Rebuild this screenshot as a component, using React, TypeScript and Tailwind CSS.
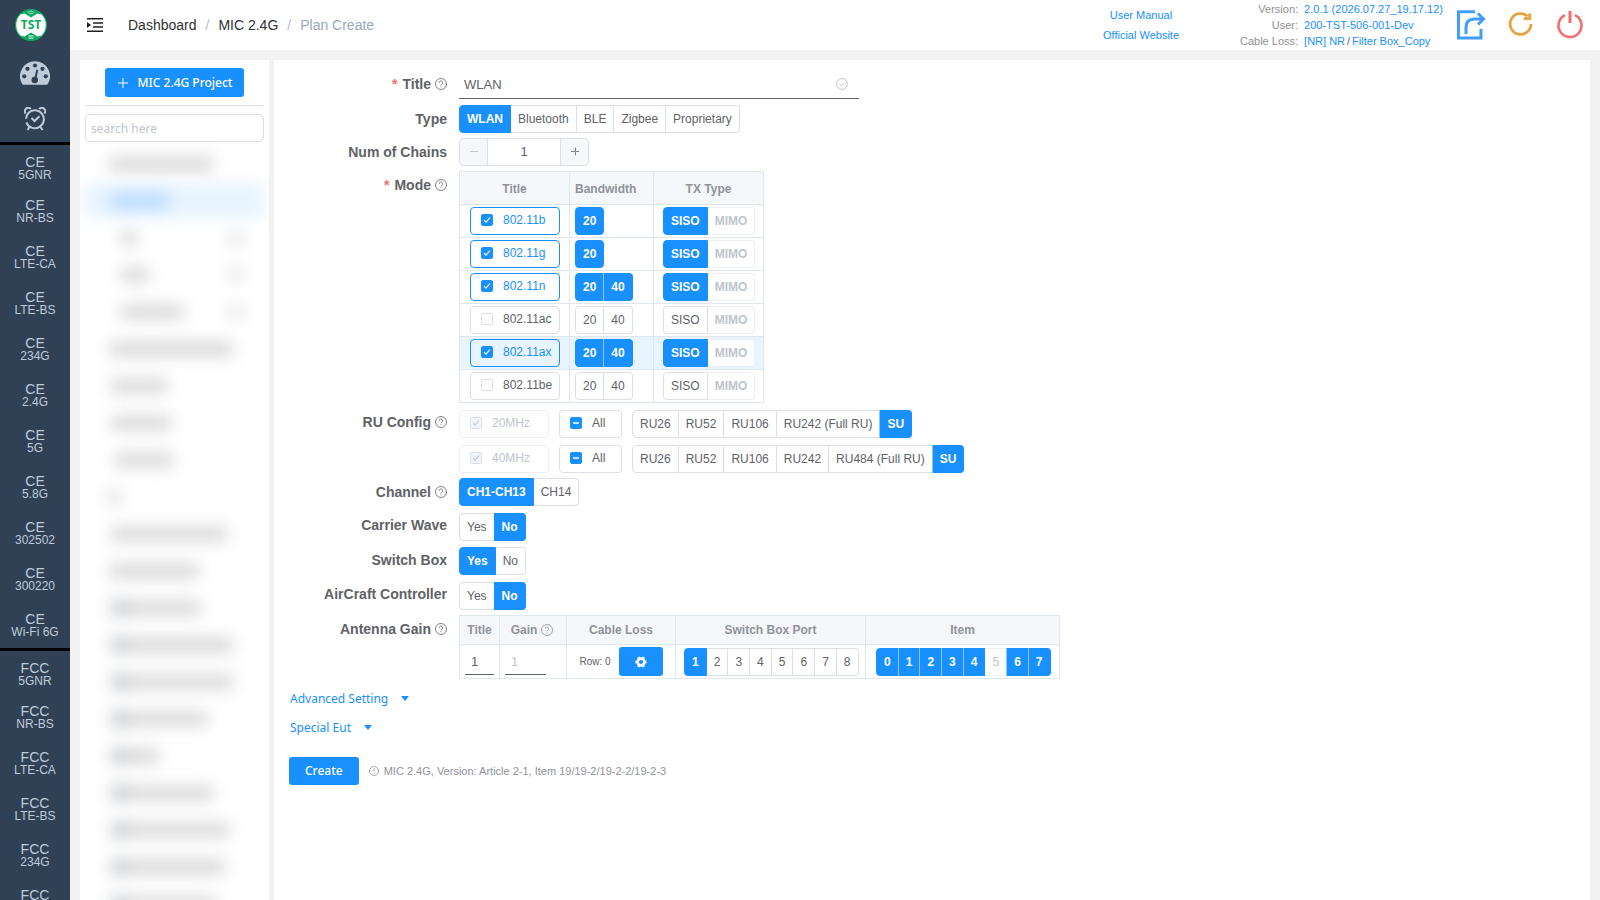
import { ReactNode, useState } from 'react';

const CE_ITEMS = ['5GNR', 'NR-BS', 'LTE-CA', 'LTE-BS', '234G', '2.4G', '5G', '5.8G', '302502', '300220', 'Wi-Fi 6G'];
const FCC_ITEMS = ['5GNR', 'NR-BS', 'LTE-CA', 'LTE-BS', '234G', '2.4G'];

const MODES = [
  { title: '802.11b', checked: true, bandwidths: ['20'] },
  { title: '802.11g', checked: true, bandwidths: ['20'] },
  { title: '802.11n', checked: true, bandwidths: ['20', '40'] },
  { title: '802.11ac', checked: false, bandwidths: ['20', '40'] },
  { title: '802.11ax', checked: true, bandwidths: ['20', '40'], current: true },
  { title: '802.11be', checked: false, bandwidths: ['20', '40'] },
];

const RU_ROWS = [
  { title: '20MHz', options: ['RU26', 'RU52', 'RU106', 'RU242 (Full RU)', 'SU'] },
  { title: '40MHz', options: ['RU26', 'RU52', 'RU106', 'RU242', 'RU484 (Full RU)', 'SU'] },
];

type HiddenProject = { indent: number; width: number; folder?: boolean; action?: boolean; selected?: boolean };

const HIDDEN_PROJECTS: HiddenProject[] = [
  { indent: 24, width: 104 },
  { indent: 26, width: 58, selected: true },
  { indent: 36, width: 16, action: true },
  { indent: 36, width: 28, action: true },
  { indent: 36, width: 62, action: true },
  { indent: 24, width: 124 },
  { indent: 26, width: 56 },
  { indent: 26, width: 60 },
  { indent: 30, width: 58 },
  { indent: 24, width: 10 },
  { indent: 26, width: 116 },
  { indent: 24, width: 90 },
  { indent: 26, width: 90, folder: true },
  { indent: 26, width: 122, folder: true },
  { indent: 26, width: 122, folder: true },
  { indent: 26, width: 96, folder: true },
  { indent: 26, width: 48, folder: true },
  { indent: 26, width: 102, folder: true },
  { indent: 26, width: 118, folder: true },
  { indent: 26, width: 114, folder: true },
  { indent: 26, width: 104, folder: true },
];

function LogoIcon() {
  return (
    <svg className="w-8 h-8" viewBox="0 0 32 32">
      <circle cx="16" cy="16" r="16" fill="#13a85f" />
      <path d="M5.500 5.500 A15 15 0 0 0 5.500 26.500 L9.500 27.500 L16 23.500 L22.500 27.500 L26.500 26.500 A15 15 0 0 0 26.500 5.500 L22.500 4.500 L16 8.500 L9.500 4.500 Z" fill="#fff" />
      <path d="M12.500 3.500 Q16 0.500 19.500 3.500 M14 5 Q16 3.300 18 5" fill="none" stroke="#a5dfc2" strokeWidth="0.900" />
      <path d="M14 26.500 h4 v3 h-4 z M14 28 h4 M16 26.500 v3" fill="none" stroke="#a5dfc2" strokeWidth="0.800" />
      <text x="16" y="20" textAnchor="middle" fontFamily="Open Sans, sans-serif" fontWeight="700" fontSize="12" fill="#13a85f">TST</text>
    </svg>
  );
}

function GaugeIcon() {
  return (
    <svg className="w-[30px] h-6" viewBox="0 0 128 100">
      <path d="M64 0a64 64 0 0 0-54 98q2 2 5 2h98q3 0 5-2A64 64 0 0 0 64 0z" fill="#bfcbd9" />
      <g fill="#304156">
        <circle cx="18" cy="64" r="9" />
        <circle cx="32" cy="32" r="9" />
        <circle cx="64" cy="18" r="9" />
        <circle cx="96" cy="32" r="9" />
        <circle cx="110" cy="64" r="9" />
        <circle cx="63" cy="80" r="14" />
        <path d="M60 78L70 35l8 2-10 44z" />
      </g>
    </svg>
  );
}

function AlarmIcon() {
  return (
    <svg className="w-[22px] h-6" viewBox="0 0 22 24" fill="none" stroke="#bfcbd9" strokeWidth="2">
      <path d="M4.600 5.800a9 9 0 1 1-2.200 9.500M4.600 5.800a9 9 0 0 0-2.500 6" />
      <path d="M1.600 6.500A3 3 0 0 1 6.800 2M20.400 6.500A3 3 0 0 0 15.200 2" />
      <path d="M7.500 11l3 3 5-4.800" />
      <path d="M5.500 20l-2 3M16.500 20l2 3" />
    </svg>
  );
}

function HelpIcon() {
  return (
    <svg className="w-3 h-3 shrink-0" viewBox="0 0 12 12" fill="none" stroke="currentColor" strokeWidth="0.800">
      <circle cx="6" cy="6" r="5.500" />
      <path d="M4.300 4.800a1.700 1.700 0 1 1 2.500 1.400q-.8.400-.8 1.100" />
      <path d="M6 8.200v1" />
    </svg>
  );
}

function Segments({
  name,
  options,
  selected,
  disabled = [],
  multiple = false,
}: {
  name: string;
  options: string[];
  selected: string[];
  disabled?: string[];
  multiple?: boolean;
}) {
  return (
    <div className="flex" role={multiple ? 'group' : 'radiogroup'} aria-label={name}>
      {options.map((option) => (
        <label
          key={option}
          className={`relative h-7 px-[7px] flex items-center border-y border-r first:border-l first:rounded-l last:rounded-r border-[#dcdfe6] bg-white whitespace-nowrap cursor-pointer has-checked:bg-[#1890ff] has-checked:border-[#1890ff] has-checked:text-white has-checked:font-bold has-disabled:text-[#c0c4cc] has-disabled:border-[#ebeef5] has-disabled:cursor-not-allowed ${
            multiple
              ? 'not-first:has-checked:shadow-[-1px_0_0_0_#8cc8ff]'
              : 'not-first:has-checked:shadow-[-1px_0_0_0_#1890ff]'
          }`}
        >
          <input
            type={multiple ? 'checkbox' : 'radio'}
            name={name}
            className="sr-only"
            defaultChecked={selected.includes(option)}
            disabled={disabled.includes(option)}
          />
          {option}
        </label>
      ))}
    </div>
  );
}

function BorderedCheckbox({
  label,
  checked = false,
  partial = false,
  disabled = false,
  wide = true,
}: {
  label: string;
  checked?: boolean;
  partial?: boolean;
  disabled?: boolean;
  wide?: boolean;
}) {
  const [isChecked, setIsChecked] = useState(checked);
  const highlighted = isChecked && !disabled;

  return (
    <label
      className={`h-7 px-[10px] pb-[2px] flex items-center gap-[10px] border rounded ${wide ? 'w-[90px]' : 'w-[63px]'} ${
        highlighted ? 'border-[#1890ff] text-[#1890ff]' : disabled ? 'border-[#ebeef5] text-[#c0c4cc]' : 'border-[#dcdfe6]'
      }`}
    >
      <span className="relative w-3 h-3 shrink-0">
        <input
          type="checkbox"
          checked={isChecked}
          disabled={disabled}
          onChange={() => setIsChecked(!isChecked)}
          className={`block appearance-none w-3 h-3 border rounded-[2px] ${
            highlighted || partial
              ? 'bg-[#1890ff] border-[#1890ff]'
              : disabled
                ? 'bg-[#f2f6fc] border-[#dcdfe6]'
                : 'bg-white border-[#dcdfe6]'
          }`}
        />
        <svg
          className={`absolute inset-0 w-3 h-3 pointer-events-none ${disabled ? 'text-[#c0c4cc]' : 'text-white'}`}
          viewBox="0 0 12 12"
          fill="none"
          stroke="currentColor"
        >
          {partial ? <path d="M3 6h6" strokeWidth="1.500" /> : isChecked && <path d="M3 6.200l2 2 4-4.700" strokeWidth="1.100" />}
        </svg>
      </span>
      {label}
    </label>
  );
}

function FormRow({
  label,
  required = false,
  help = false,
  htmlFor,
  offset = '',
  children,
}: {
  label: string;
  required?: boolean;
  help?: boolean;
  htmlFor?: string;
  offset?: string;
  children: ReactNode;
}) {
  return (
    <div className={`grid grid-cols-[170px_1fr] ${offset}`}>
      <label htmlFor={htmlFor} className="h-7 pr-3 flex items-center justify-end gap-1 text-sm font-bold whitespace-nowrap">
        {required && <span className="pr-px text-[#f56c6c]">*</span>}
        {label}
        {help && <HelpIcon />}
      </label>
      {children}
    </div>
  );
}

function NavGroup({ region, items }: { region: string; items: string[] }) {
  return (
    <ul className="border-t-[3px] border-black">
      {items.map((item) => (
        <li key={item} className="group">
          <a href="#" className="block pt-[11px] pb-[9px] group-first:pb-[6px] text-center">
            <span className="block text-sm leading-[13px]">{region}</span>
            <span className="block text-xs leading-[13px]">{item}</span>
          </a>
        </li>
      ))}
    </ul>
  );
}

function Sidebar() {
  return (
    <nav className="w-[70px] shrink-0 overflow-hidden bg-[#304156] text-[#bfcbd9]">
      <a href="#" aria-label="Home" className="h-[50px] pl-[15px] flex items-center">
        <LogoIcon />
      </a>
      <a href="#" aria-label="Dashboard" className="h-[46px] flex items-center justify-center">
        <GaugeIcon />
      </a>
      <a href="#" aria-label="Schedule" className="h-[46px] flex items-center justify-center">
        <AlarmIcon />
      </a>
      <NavGroup region="CE" items={CE_ITEMS} />
      <NavGroup region="FCC" items={FCC_ITEMS} />
    </nav>
  );
}

function Header() {
  return (
    <header className="h-[50px] shrink-0 pl-[17px] pr-4 flex items-center bg-white">
      <button aria-label="Toggle sidebar">
        <svg className="w-4 h-4" viewBox="0 0 16 16" fill="none" stroke="#222" strokeWidth="1.600">
          <path d="M0 1.800h16M6 6h10M6 10h10M0 14.200h16" />
          <path d="M0 5l4 3-4 3z" fill="#222" stroke="none" />
        </svg>
      </button>
      <nav className="ml-[25px] flex gap-[9px] text-sm text-[#303133]">
        <a href="#">Dashboard</a>
        <span className="text-[#b4bccc]">/</span>
        <a href="#">MIC 2.4G</a>
        <span className="text-[#b4bccc]">/</span>
        <span className="text-[#97a8be]">Plan Create</span>
      </nav>

      <div className="ml-auto flex flex-col items-center text-[11px] leading-5 text-[#1890ff]">
        <a href="#">User Manual</a>
        <a href="#">Official Website</a>
      </div>
      <dl className="ml-[61px] w-[210px] grid grid-cols-[auto_1fr] gap-x-[6px] text-[11px] leading-4 text-[#1890ff] whitespace-nowrap">
        <dt className="text-right text-[#909090]">Version:</dt>
        <dd>2.0.1 (2026.07.27_19.17.12)</dd>
        <dt className="text-right text-[#909090]">User:</dt>
        <dd>200-TST-506-001-Dev</dd>
        <dt className="text-right text-[#909090]">Cable Loss:</dt>
        <dd>
          [NR] NR<span className="px-[2px] text-[#606266]">/</span>Filter Box_Copy
        </dd>
      </dl>
      <button aria-label="Share" className="ml-[6px]">
        <svg className="w-[30px] h-[30px]" viewBox="0 0 30 30" fill="none" stroke="#409eff" strokeWidth="3">
          <path d="M19 1.800H2.500v26.200h22.500V19" />
          <path d="M10 24v-6.500q0-8.500 8.500-8.500H26" />
          <path d="M22 3.500l5.500 5.500-5.500 5.500" />
        </svg>
      </button>
      <button aria-label="Refresh" className="ml-[22px]">
        <svg className="w-[26px] h-[26px]" viewBox="0 0 26 26" fill="none" stroke="#e6a23c" strokeWidth="2.800">
          <path d="M22.900 12a10.400 10.400 0 1 1-3.400-7.700" />
          <path d="M16 5.500h4.500V1.800h2.400v6H16z" fill="#e6a23c" strokeWidth="0.600" />
        </svg>
      </button>
      <button aria-label="Log out" className="ml-[22px]">
        <svg className="w-7 h-7" viewBox="0 0 28 28" fill="none" stroke="#f56c6c" strokeWidth="2.600">
          <path d="M9 4.200a11.500 11.500 0 1 0 10 0" />
          <path d="M14 0v12" strokeWidth="3" />
        </svg>
      </button>
    </header>
  );
}

function ProjectPanel() {
  return (
    <aside className="w-[189px] shrink-0 px-[5px] pt-2 bg-white overflow-hidden font-['Noto_Sans',sans-serif]">
      <button className="mx-auto h-[29px] px-3 flex items-center gap-[9px] rounded-[3px] bg-[#1890ff] text-white text-xs font-medium whitespace-nowrap">
        <svg className="w-3 h-3" viewBox="0 0 12 12" stroke="currentColor">
          <path d="M6 1v10M1 6h10" />
        </svg>
        MIC 2.4G Project
      </button>
      <hr className="my-2 border-[#dcdfe6]" />
      <input
        type="search"
        aria-label="Search projects"
        placeholder="search here"
        className="block w-full h-7 px-[5px] border border-[#dcdfe6] rounded text-xs placeholder:text-[#c0c4cc]"
      />
      <ul aria-hidden="true" className="mt-[3px]">
        {HIDDEN_PROJECTS.map((project, i) => (
          <li key={i} className="relative h-[37px] flex items-center">
            {project.selected && <span className="absolute inset-x-0 inset-y-px bg-[#e8f4ff] blur-[7px]" />}
            <span className="relative flex grow items-center blur-[8px]" style={{ paddingLeft: project.indent }}>
              {project.folder && <span className="w-4 h-4 bg-[#c6cace]" />}
              <span
                className={project.selected ? 'h-[14px] bg-[#b4d8ff]' : 'h-[14px] bg-[#d6d6d6]'}
                style={{ width: project.folder ? project.width - 16 : project.width }}
              />
              {project.action && <span className="ml-auto mr-[22px] w-3 h-3 bg-[#dcdcdc]" />}
            </span>
          </li>
        ))}
      </ul>
    </aside>
  );
}

function ModeTable() {
  return (
    <table className="w-[304px] table-fixed border-collapse [&_td]:border [&_th]:border [&_td]:border-[#dfe6ec] [&_th]:border-[#dfe6ec]">
      <colgroup>
        <col className="w-[110px]" />
        <col className="w-[84px]" />
        <col className="w-[110px]" />
      </colgroup>
      <thead className="bg-[#f5f7fa] text-[#909399]">
        <tr className="h-[33px]">
          <th className="pt-[2px]">Title</th>
          <th className="pt-[2px] pl-[5px] text-left">Bandwidth</th>
          <th className="pt-[2px]">TX Type</th>
        </tr>
      </thead>
      <tbody>
        {MODES.map((mode) => (
          <tr key={mode.title} className={mode.current ? 'bg-[#e8f4ff]' : ''}>
            <td className="pl-[10px] py-[2px]">
              <BorderedCheckbox label={mode.title} checked={mode.checked} />
            </td>
            <td className="pl-[5px] py-[2px]">
              <Segments
                name={`Bandwidth ${mode.title}`}
                options={mode.bandwidths}
                selected={mode.checked ? mode.bandwidths : []}
                multiple
              />
            </td>
            <td className="pl-[9px] py-[2px] [&_label:last-child]:font-bold">
              <Segments
                name={`TX Type ${mode.title}`}
                options={['SISO', 'MIMO']}
                selected={mode.checked ? ['SISO'] : []}
                disabled={['MIMO']}
                multiple
              />
            </td>
          </tr>
        ))}
      </tbody>
    </table>
  );
}

function AntennaTable() {
  return (
    <table className="w-[600px] table-fixed border-collapse [&_td]:border [&_th]:border [&_td]:border-[#dfe6ec] [&_th]:border-[#dfe6ec]">
      <colgroup>
        <col className="w-[40px]" />
        <col className="w-[67px]" />
        <col className="w-[109px]" />
        <col className="w-[190px]" />
        <col className="w-[194px]" />
      </colgroup>
      <thead className="bg-[#f5f7fa] text-[#909399]">
        <tr className="h-[29px]">
          <th>Title</th>
          <th>
            <span className="pr-[2px] flex items-center justify-center gap-1">
              Gain <HelpIcon />
            </span>
          </th>
          <th>Cable Loss</th>
          <th>Switch Box Port</th>
          <th>Item</th>
        </tr>
      </thead>
      <tbody>
        <tr>
          <td className="px-[5px] py-[2px]">
            <input aria-label="Antenna title" defaultValue="1" className="block w-full h-[27px] px-[6px] border-b border-[#606266] text-[13px]" />
          </td>
          <td className="px-[5px] py-[2px]">
            <input
              aria-label="Antenna gain"
              placeholder="1"
              className="block w-[41px] h-[27px] px-[6px] border-b border-[#606266] text-[13px] placeholder:text-[#c0c4cc]"
            />
          </td>
          <td className="py-[2px]">
            <div className="flex items-center justify-center gap-2 text-[10px]">
              Row: 0
              <button
                type="button"
                aria-label="Cable loss settings"
                className="w-11 h-[29px] flex items-center justify-center rounded-[3px] bg-[#1890ff]"
              >
                <svg className="w-3 h-3" viewBox="0 0 12 12" fill="none" stroke="#fff">
                  <circle cx="6" cy="6" r="3.400" strokeWidth="2.600" />
                  <path d="M6 0.200" />
                  <path d="M3.200 1.200l5.600 9.600M8.800 1.200l-5.600 9.600M0.300 6h11.400" strokeWidth="2.600" strokeDasharray="2.400 6.400 2.400 20" />
                </svg>
              </button>
            </div>
          </td>
          <td className="pl-2 py-[2px]">
            <Segments name="Switch Box Port" options={['1', '2', '3', '4', '5', '6', '7', '8']} selected={['1']} />
          </td>
          <td className="pl-[10px] py-[2px]">
            <Segments
              name="Item"
              options={['0', '1', '2', '3', '4', '5', '6', '7']}
              selected={['0', '1', '2', '3', '4', '6', '7']}
              disabled={['5']}
              multiple
            />
          </td>
        </tr>
      </tbody>
    </table>
  );
}

function Stepper() {
  const [value, setValue] = useState(1);

  return (
    <div className="w-[130px] h-7 flex border border-[#dcdfe6] rounded overflow-hidden">
      <button
        type="button"
        aria-label="Decrease"
        disabled={value <= 1}
        onClick={() => setValue(value - 1)}
        className="w-7 shrink-0 flex items-center justify-center border-r border-[#dcdfe6] bg-[#f5f7fa] text-[#808389] disabled:text-[#c0c4cc]"
      >
        <svg className="w-[10px] h-[10px]" viewBox="0 0 10 10" stroke="currentColor">
          <path d="M1 4.500h8" />
        </svg>
      </button>
      <input
        id="chains"
        value={value}
        onChange={(e) => setValue(Number(e.target.value) || 1)}
        className="grow min-w-0 text-center text-[13px]"
      />
      <button
        type="button"
        aria-label="Increase"
        onClick={() => setValue(value + 1)}
        className="w-7 shrink-0 flex items-center justify-center border-l border-[#dcdfe6] bg-[#f5f7fa] text-[#808389]"
      >
        <svg className="w-[10px] h-[10px]" viewBox="0 0 10 10" stroke="currentColor">
          <path d="M1 4.500h8M5.500 0.500v8" />
        </svg>
      </button>
    </div>
  );
}

function MoreButton({ label }: { label: string }) {
  return (
    <button type="button" className="h-[29px] px-px flex items-center gap-[13px] text-xs text-[#1890ff] font-['Noto_Sans',sans-serif]">
      {label}
      <svg className="w-2 h-[5px]" viewBox="0 0 8 5" fill="currentColor">
        <path d="M0 0h8L4 5z" />
      </svg>
    </button>
  );
}

function PlanForm() {
  return (
    <form className="px-[15px] pt-[10px]">
      <div className="flex flex-col gap-[5px]">
        <FormRow label="Title" htmlFor="title" required help offset="pb-px">
          <div className="w-[400px] h-[29px] flex items-center border-b border-[#606266]">
            <input id="title" defaultValue="WLAN" className="grow h-full px-[5px] text-[13px]" />
            <svg className="mr-[11px] w-3 h-3" viewBox="0 0 12 12" fill="none" stroke="#c0c4cc">
              <circle cx="6" cy="6" r="5.400" />
              <path d="M3.300 6l2 2 3.500-3.500" />
            </svg>
          </div>
        </FormRow>
        <FormRow label="Type">
          <Segments name="Type" options={['WLAN', 'Bluetooth', 'BLE', 'Zigbee', 'Proprietary']} selected={['WLAN']} />
        </FormRow>
        <FormRow label="Num of Chains" htmlFor="chains">
          <Stepper />
        </FormRow>
        <FormRow label="Mode" required help>
          <ModeTable />
        </FormRow>
        <FormRow label="RU Config" help>
          <div className="pt-[2px] flex flex-col gap-[7px]">
            {RU_ROWS.map((row) => (
              <div key={row.title} className="flex gap-[10px]">
                <BorderedCheckbox label={row.title} checked disabled />
                <BorderedCheckbox label="All" partial wide={false} />
                <Segments name={`RU Config ${row.title}`} options={row.options} selected={['SU']} multiple />
              </div>
            ))}
          </div>
        </FormRow>
        <FormRow label="Channel" help>
          <Segments name="Channel" options={['CH1-CH13', 'CH14']} selected={['CH1-CH13']} />
        </FormRow>
        <FormRow label="Carrier Wave">
          <div className="pt-[2px]">
            <Segments name="Carrier Wave" options={['Yes', 'No']} selected={['No']} />
          </div>
        </FormRow>
        <FormRow label="Switch Box">
          <div className="pt-px">
            <Segments name="Switch Box" options={['Yes', 'No']} selected={['Yes']} />
          </div>
        </FormRow>
        <FormRow label="AirCraft Controller">
          <div className="pt-[2px]">
            <Segments name="AirCraft Controller" options={['Yes', 'No']} selected={['No']} />
          </div>
        </FormRow>
        <FormRow label="Antenna Gain" help>
          <AntennaTable />
        </FormRow>
      </div>

      <div className="mt-[5px]">
        <MoreButton label="Advanced Setting" />
        <MoreButton label="Special Eut" />
      </div>

      <div className="mt-[15px] flex items-center">
        <button type="button" className="h-7 px-4 rounded-[3px] bg-[#1890ff] text-white text-xs font-medium font-['Noto_Sans',sans-serif]">
          Create
        </button>
        <p className="ml-[10px] flex items-center gap-[5px] text-[11px] text-[#909399]">
          <svg className="w-[10px] h-[10px]" viewBox="0 0 10 10" fill="none" stroke="currentColor" strokeWidth="0.800">
            <circle cx="5" cy="5" r="4.500" />
            <path d="M5 2.300v3.500M5 6.800v1" />
          </svg>
          MIC 2.4G, Version: Article 2-1, Item 19/19-2/19-2-2/19-2-3
        </p>
      </div>
    </form>
  );
}

export default function App() {
  return (
    <div className="h-screen flex overflow-hidden bg-[#f2f2f2] text-xs text-[#606266] font-['Liberation_Sans',Arial,sans-serif]">
      <Sidebar />
      <div className="flex flex-col grow min-w-0">
        <Header />
        <div className="grow min-h-0 flex gap-[5px] pt-[10px] px-[10px]">
          <ProjectPanel />
          <main className="grow min-w-0 bg-white overflow-hidden">
            <PlanForm />
          </main>
        </div>
      </div>
    </div>
  );
}
